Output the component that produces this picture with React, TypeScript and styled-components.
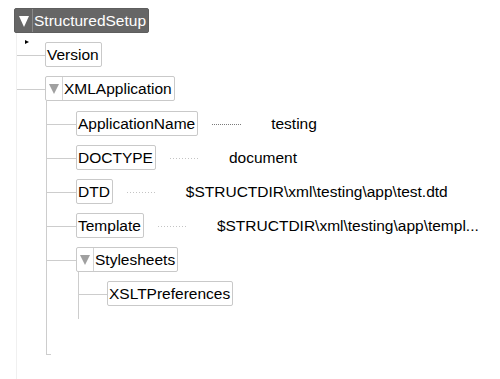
import React from "react";
import styled, { createGlobalStyle } from "styled-components";

const GlobalStyle = createGlobalStyle`
    html, body {
        margin: 0;
        padding: 0;
        background: #ffffff;
    }
    body {
        font-family: "Liberation Sans", Arial, sans-serif;
        color: #000000;
    }
`;

const Page = styled.div`
    position: relative;
    height: 379px;
    width: 500px;
    box-sizing: border-box;
    padding: 8px 0 0 14px;
    display: flex;
    flex-direction: column;
    align-items: flex-start;
    overflow: hidden;
`;

const NodeBox = styled.div<{ $root?: boolean }>`
    display: inline-flex;
    align-items: stretch;
    height: 25px;
    box-sizing: border-box;
    border: 1px solid ${(p) => (p.$root ? "#5e5e5e" : "#c9c9c9")};
    border-radius: 2px;
    background: ${(p) => (p.$root ? "#666666" : "#ffffff")};
    color: ${(p) => (p.$root ? "#ffffff" : "#000000")};
    font-size: 15.5px;
    line-height: 23px;
    white-space: nowrap;
    flex-shrink: 0;
`;

const Toggle = styled.span<{ $root?: boolean }>`
    width: ${(p) => (p.$root ? "17px" : "16px")};
    display: flex;
    align-items: center;
    justify-content: center;
    border-right: 1px solid ${(p) => (p.$root ? "#8a8a8a" : "#d4d4d4")};
`;

const Arrow = styled.span<{ $root?: boolean }>`
    width: 0;
    height: 0;
    border-left: 5px solid transparent;
    border-right: 5px solid transparent;
    border-top: ${(p) => (p.$root ? "11px solid #ffffff" : "10px solid #a0a0a0")};
    margin-top: 1px;
`;

const Label = styled.span`
    padding: 0 2px 0 1px;
`;

const Branch = styled.div<{
    $offset: number;
    $faint?: boolean;
    $top: number;
    $bottom: number;
    $tick?: boolean;
}>`
    position: relative;
    align-self: stretch;
    margin-left: ${(p) => p.$offset}px;
    border-left: 1px solid ${(p) => (p.$faint ? "#f0f0f0" : "#cdcdcd")};
    display: flex;
    flex-direction: column;
    align-items: flex-start;
    gap: 9px;
    padding-top: ${(p) => p.$top}px;
    padding-bottom: ${(p) => p.$bottom}px;

    ${(p) =>
        p.$tick &&
        `
        &::after {
            content: "";
            position: absolute;
            left: -1px;
            bottom: 0;
            width: 5px;
            height: 1px;
            background: #cdcdcd;
        }
    `}
`;

const RootBranch = styled(Branch)`
    flex: 1;
`;

const Row = styled.div`
    display: flex;
    align-items: flex-start;
`;

const Connector = styled.span<{ $w: number }>`
    width: ${(p) => p.$w}px;
    height: 1px;
    margin-top: 13px;
    background: #cdcdcd;
    flex-shrink: 0;
`;

const Column = styled.div`
    display: flex;
    flex-direction: column;
    align-items: flex-start;
`;

const Dots = styled.span<{ $dark?: boolean }>`
    width: 30px;
    height: 1px;
    margin: 13px 0 0 14px;
    flex-shrink: 0;
    background: repeating-linear-gradient(
        to right,
        ${(p) => (p.$dark ? "#7a7a7a" : "#c4c4c4")} 0 1px,
        transparent 1px ${(p) => (p.$dark ? "2px" : "3px")}
    );
`;

const Value = styled.span`
    margin-left: 29px;
    font-size: 15.5px;
    line-height: 25px;
    white-space: nowrap;
`;

const Marker = styled.span`
    position: absolute;
    left: 8px;
    top: 7px;
    width: 0;
    height: 0;
    border-top: 2.5px solid transparent;
    border-bottom: 2.5px solid transparent;
    border-left: 4px solid #000000;
`;

const attributes = [
    { name: "ApplicationName", value: "testing", dark: true },
    { name: "DOCTYPE", value: "document" },
    { name: "DTD", value: "$STRUCTDIR\\xml\\testing\\app\\test.dtd" },
    { name: "Template", value: "$STRUCTDIR\\xml\\testing\\app\\templ..." },
];

const App = () => (
    <Page>
        <GlobalStyle />
        <NodeBox $root>
            <Toggle $root>
                <Arrow $root />
            </Toggle>
            <Label>StructuredSetup</Label>
        </NodeBox>
        <RootBranch $offset={2} $faint $top={9} $bottom={0}>
            <Marker />
            <Row>
                <Connector $w={28} />
                <NodeBox>
                    <Label>Version</Label>
                </NodeBox>
            </Row>
            <Row>
                <Connector $w={28} />
                <Column>
                    <NodeBox>
                        <Toggle>
                            <Arrow />
                        </Toggle>
                        <Label>XMLApplication</Label>
                    </NodeBox>
                    <Branch $offset={1} $top={10} $bottom={36} $tick>
                        {attributes.map((a) => (
                            <Row key={a.name}>
                                <Connector $w={29} />
                                <NodeBox>
                                    <Label>{a.name}</Label>
                                </NodeBox>
                                <Dots $dark={a.dark} />
                                <Value>{a.value}</Value>
                            </Row>
                        ))}
                        <Row>
                            <Connector $w={29} />
                            <Column>
                                <NodeBox>
                                    <Toggle>
                                        <Arrow />
                                    </Toggle>
                                    <Label>Stylesheets</Label>
                                </NodeBox>
                                <Branch $offset={2} $top={9} $bottom={13}>
                                    <Row>
                                        <Connector $w={28} />
                                        <NodeBox>
                                            <Label>XSLTPreferences</Label>
                                        </NodeBox>
                                    </Row>
                                </Branch>
                            </Column>
                        </Row>
                    </Branch>
                </Column>
            </Row>
        </RootBranch>
    </Page>
);

export default App;
